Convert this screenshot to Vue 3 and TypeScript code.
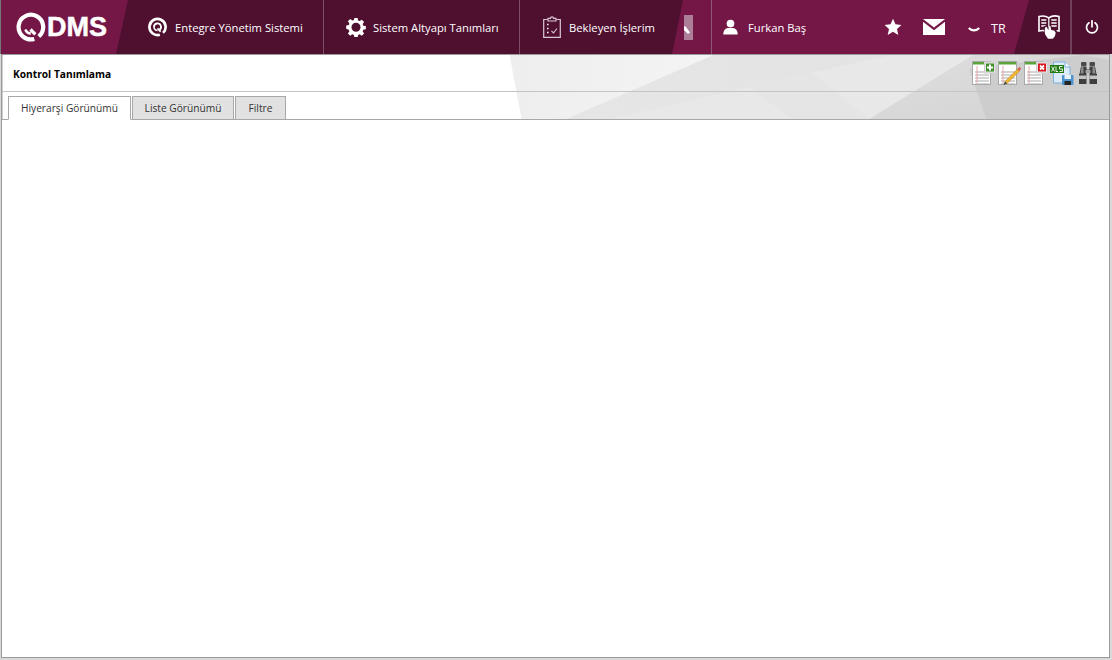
<script setup lang="ts">
const tabs: { label: string; width: number; active?: boolean }[] = [
  { label: 'Hiyerarşi Görünümü', width: 123, active: true },
  { label: 'Liste Görünümü', width: 102 },
  { label: 'Filtre', width: 51 },
]
const rows = [9, 12, 15, 18, 21]
</script>

<template>
  <div class="page">
    <header class="topbar">
      <svg class="bar-bg" viewBox="0 0 1112 54" preserveAspectRatio="none" aria-hidden="true">
        <polygon points="128,0 683,0 672,54 116,54" fill="#4f1030" />
        <polygon points="1029,0 1112,0 1112,54 1014,54" fill="#4f1030" />
      </svg>

      <div class="logo">
        <svg class="logo-q" viewBox="0 0 30 30" aria-hidden="true">
          <path d="M18.300 26.900A12.300 12.300 0 1 1 22.800 24.500" fill="none" stroke="#fff" stroke-width="4.200" />
          <path d="M9.300 17.500a6.200 6.200 0 0 0 5.500 4" fill="none" stroke="#fff" stroke-width="2.400" />
          <path d="M14.500 17.500l4.800 4.800" fill="none" stroke="#fff" stroke-width="3.200" />
        </svg>
        <span class="logo-text">DMS</span>
      </div>

      <div class="nav nav-a">
        <svg class="nav-icon small" viewBox="0 0 20 20" aria-hidden="true">
          <path d="M12.500 18.100A8.500 8.500 0 1 1 15.800 16.200" fill="none" stroke="#fff" stroke-width="2.800" />
          <path d="M6.300 10a3.700 3.700 0 1 1 5.500 3.200" fill="none" stroke="#fff" stroke-width="1.900" />
          <path d="M10 11.500l3.300 3.300" stroke="#fff" stroke-width="2" />
          <path d="M6.300 10a3.700 3.700 0 0 0 3.700 3.700" fill="none" stroke="#fff" stroke-width="1.600" />
        </svg>
        <span>Entegre Yönetim Sistemi</span>
      </div>

      <div class="nav nav-b">
        <svg class="nav-icon" viewBox="-1 -1 22 22" aria-hidden="true">
          <path
            fill="#fff"
            fill-rule="evenodd"
            d="M8.200 0h3.600l.5 2.800 1.700.7 2.400-1.600 2.500 2.500-1.600 2.400.7 1.700 2.800.5v3.600l-2.800.5-.7 1.700 1.600 2.400-2.500 2.500-2.400-1.600-1.700.7-.5 2.800H8.200l-.5-2.800-1.700-.7-2.400 1.600-2.500-2.500 1.600-2.400-.7-1.700L-.8 12V8.400l2.800-.5.7-1.700-1.600-2.400 2.500-2.500L6 2.900l1.700-.7zM10 5.200a5 5 0 1 0 0 10 5 5 0 0 0 0-10z"
          />
        </svg>
        <span>Sistem Altyapı Tanımları</span>
      </div>

      <div class="nav nav-c">
        <svg class="nav-icon narrow" viewBox="0 0 18 22" aria-hidden="true">
          <path d="M4.500 3.500H.7v17.800h16.600V3.500h-3.800" fill="none" stroke="#d9c8d1" stroke-width="1.200" />
          <path d="M5 5V2.300h2.500a1.500 1.500 0 0 1 3 0H13V5z" fill="none" stroke="#d9c8d1" stroke-width="1.200" />
          <path d="M4 8.500h1.500M4 12.500h1.500M4 16.500h1.500" stroke="#fff" stroke-width="1.400" />
          <path d="M8.500 15l2 2 3.500-4.500" fill="none" stroke="#d9c8d1" stroke-width="1.100" />
        </svg>
        <span>Bekleyen İşlerim</span>
      </div>

      <div class="overflow">
        <i>
          <svg viewBox="0 0 9 25" aria-hidden="true">
            <path d="M0 11l2 1 4 5.500-2 1.500-4-4z" fill="#fff" />
          </svg>
        </i>
      </div>

      <div class="user">
        <svg class="user-icon" viewBox="0 0 16 16" aria-hidden="true">
          <circle cx="8" cy="4.300" r="4.100" fill="#fff" />
          <path d="M0.300 16c0-4 1.800-6.500 4.700-7h6c2.900.5 4.700 3 4.700 7z" fill="#fff" />
        </svg>
        <span>Furkan Baş</span>
      </div>

      <div class="tools">
        <svg class="star" viewBox="0 0 18 18" aria-hidden="true">
          <path fill="#fff" d="M9 .8l2.500 5.500 5.900.6-4.400 4 1.300 6L9 13.800 3.700 16.900l1.300-6-4.400-4 5.900-.6z" />
        </svg>
        <svg class="mail" viewBox="0 0 22 16" aria-hidden="true">
          <path fill="#fff" d="M0 0h22L11 8.500zM0 2.800l11 8.400 11-8.400V16H0z" />
        </svg>
        <svg class="chevron" viewBox="0 0 12 6" aria-hidden="true">
          <path d="M.8 1c3 3.200 7.400 3.200 10.400 0" fill="none" stroke="#fff" stroke-width="2.200" />
        </svg>
        <span class="lang">TR</span>
      </div>

      <div class="guide">
        <svg viewBox="0 0 22 24" aria-hidden="true">
          <path d="M10.800 2.800C8 .9 4 .7 1 1.500v14.500c3-.8 7-.5 9.800 1.400C13.500 15.500 18 15.200 21 16V1.500C18 .7 13.500.9 10.800 2.800z" fill="none" stroke="#fff" stroke-width="1.600" />
          <path d="M10.800 2.800v14" stroke="#fff" stroke-width="1.200" />
          <path d="M3.300 5h5M3.300 8h5M3.300 11h5M13.300 5h5.400M13.300 8h5.400M13.300 11h5.400" stroke="#fff" stroke-width="1.300" />
          <path fill="#4f1030" d="M5.500 11.500l3.500-1.500 2 2.500 2-1.500 1.500 1.500 3.500.5 1 4-2 5.500-3 2H9.500l-3-5z" />
          <path fill="#fff" d="M7 12.500l1.600-.8 1.800 3.600.3-4 1.700-.2.800 4 3 .4 1.500 2.200-.8 3.500-2.200 2.600H10l-2.800-4.300-.6-3z" />
        </svg>
      </div>

      <div class="power">
        <svg viewBox="0 0 14 14" aria-hidden="true">
          <path d="M4 2.800a5.500 5.500 0 1 0 6 0" fill="none" stroke="#fff" stroke-width="1.700" stroke-linecap="round" />
          <path d="M7 .8v6" stroke="#fff" stroke-width="1.700" stroke-linecap="round" />
        </svg>
      </div>
    </header>

    <main class="panel">
      <div class="head">
        <svg class="head-bg" viewBox="0 0 1108 65" preserveAspectRatio="none" aria-hidden="true">
          <defs>
            <linearGradient id="soft" x1="0" x2="1" y1="0" y2="0">
              <stop offset="0" stop-color="#eeeeee" />
              <stop offset="1" stop-color="#f4f4f4" />
            </linearGradient>
            <linearGradient id="mid" x1="0" x2="1" y1="0" y2="0">
              <stop offset="0" stop-color="#e6e6e6" />
              <stop offset="1" stop-color="#e1e1e1" />
            </linearGradient>
            <linearGradient id="edge" x1="0" x2="1" y1="0" y2="1">
              <stop offset="0" stop-color="#dfdfdf" />
              <stop offset="1" stop-color="#d2d2d2" />
            </linearGradient>
          </defs>
          <polygon points="508,0 712,0 564,65 520,65" fill="url(#soft)" />
          <polygon points="712,0 1108,0 1108,65 564,65" fill="url(#mid)" />
          <polygon points="608,65 810,18 890,0 972,0 868,65" fill="#e8e8e8" />
          <polygon points="748,32 810,18 868,65 790,65" fill="#e5e5e5" />
          <polygon points="972,0 1108,0 1108,65 868,65" fill="url(#edge)" />
          <polygon points="968,14 985,65 1108,65 1108,5 1082,0" fill="#cdcdcd" />
        </svg>

        <div class="title-row">
          <h1>Kontrol Tanımlama</h1>
          <div class="actions">
            <svg class="act" viewBox="0 0 24 24" aria-hidden="true">
              <rect x=".5" y=".5" width="18" height="23" fill="#fff" stroke="#a8a8a8" />
              <rect x="1" y="1" width="17" height="2.500" fill="#5aa53a" />
              <path v-for="r in rows" :key="r" :d="`M3 ${r + 2}h14`" stroke="#a9a9a9" />
              <path d="M5 5v17" stroke="#e8a8a8" />
              <rect x="12.500" y="1" width="11" height="11" fill="#e5e5e5" stroke="#cfcfcf" />
              <rect x="14" y="2.500" width="8" height="8" fill="#3f8f2a" />
              <path d="M18 3.500v6M15 6.500h6" stroke="#fff" stroke-width="2" />
            </svg>
            <svg class="act" viewBox="0 0 24 24" aria-hidden="true">
              <rect x=".5" y=".5" width="18" height="23" fill="#fff" stroke="#a8a8a8" />
              <rect x="1" y="1" width="17" height="2.500" fill="#5aa53a" />
              <path v-for="r in rows" :key="r" :d="`M3 ${r + 2}h14`" stroke="#a9a9a9" />
              <path d="M5 5v17" stroke="#e8a8a8" />
              <path d="M7 20.500L19.500 8l2 2L9 22.500z" fill="#f2b632" stroke="#a8761a" stroke-width=".5" />
              <path d="M19.500 8l2-2 1.500 1.500L21.500 10z" fill="#d9534f" />
              <path d="M7 20.500L5.500 24l3.500-1.500z" fill="#333" />
            </svg>
            <svg class="act" viewBox="0 0 24 24" aria-hidden="true">
              <rect x=".5" y=".5" width="18" height="23" fill="#fff" stroke="#a8a8a8" />
              <rect x="1" y="1" width="17" height="2.500" fill="#5aa53a" />
              <path v-for="r in rows" :key="r" :d="`M3 ${r + 2}h14`" stroke="#a9a9a9" />
              <path d="M5 5v17" stroke="#e8a8a8" />
              <rect x="12.500" y="1" width="11" height="11" fill="#e5e5e5" stroke="#cfcfcf" />
              <rect x="14" y="2.500" width="8" height="8" fill="#d9141e" />
              <path d="M16 4.500l4 4M20 4.500l-4 4" stroke="#fff" stroke-width="1.800" />
            </svg>
            <svg class="act" viewBox="0 0 24 24" aria-hidden="true">
              <path d="M3.500 1H15l5 5v16H3.500z" fill="#dcebf9" stroke="#7aaedc" />
              <path d="M15 1v5h5" fill="#fff" stroke="#7aaedc" />
              <rect x="0" y="4" width="14" height="8" fill="#1f7a12" />
              <path d="M1.500 5.500l3 5M4.500 5.500l-3 5M6 5.500v5h2M12.500 5.500h-3v2.500h3v2.500h-3" stroke="#fff" fill="none" stroke-width=".9" />
              <rect x="12" y="14" width="11.500" height="10" rx="1" fill="#4d93d0" />
              <rect x="14.500" y="14" width="6.500" height="4" fill="#e9f1f8" />
              <rect x="14.500" y="20" width="6.500" height="4" fill="#262626" />
            </svg>
            <svg class="act bino" viewBox="0 0 20 24" aria-hidden="true">
              <rect x="3" y="1" width="5.500" height="4" rx="1" fill="#4a4a4a" />
              <rect x="11.500" y="1" width="5.500" height="4" rx="1" fill="#4a4a4a" />
              <path d="M3 5.500h5.500v3h3v-3H17l1.500 7.500h-7v-2h-3v2h-7z" fill="#3d3d3d" />
              <path d="M3.500 6h2v6.500h-3zM14.500 6h2l1 6.500h-3z" fill="#8c8c8c" />
              <rect x="7.500" y="9" width="5" height="3" fill="#a5a5a5" />
              <rect x="1" y="13" width="7.500" height="10" fill="#3f3f3f" />
              <rect x="11.500" y="13" width="7.500" height="10" fill="#3f3f3f" />
              <rect x="1" y="14.500" width="7.500" height="3.500" fill="#c2c2c2" />
              <rect x="11.500" y="14.500" width="7.500" height="3.500" fill="#c2c2c2" />
            </svg>
          </div>
        </div>

        <nav class="tabs">
          <div
            v-for="tab in tabs"
            :key="tab.label"
            class="tab"
            :class="{ active: tab.active }"
            :style="{ width: tab.width + 'px' }"
          >
            {{ tab.label }}
          </div>
        </nav>
      </div>
      <div class="content"></div>
    </main>
  </div>
</template>

<style scoped>
.page {
  width: 1112px;
  height: 660px;
  display: flex;
  flex-direction: column;
  overflow: hidden;
  background: #d9d9d9;
  font-family: 'Open Sans', 'Noto Sans', sans-serif;
}
.topbar {
  position: relative;
  flex: 0 0 54px;
  display: flex;
  align-items: center;
  background: #741747;
  color: #fff;
  font-size: 11.25px;
  border-left: 1px solid #777;
  box-sizing: border-box;
}
.bar-bg {
  position: absolute;
  left: -1px;
  top: 0;
  width: 1112px;
  height: 54px;
}
.topbar > div {
  position: relative;
}
.logo {
  width: 127px;
  display: flex;
  align-items: center;
  padding-left: 15px;
  box-sizing: border-box;
}
.logo-q {
  width: 30px;
  height: 30px;
  flex: none;
}
.logo-text {
  font-family: 'Liberation Sans', sans-serif;
  font-weight: 700;
  font-size: 27px;
  margin-left: 1px;
  -webkit-text-stroke: 0.5px #fff;
}
.nav {
  height: 54px;
  display: flex;
  align-items: center;
  box-sizing: border-box;
  white-space: nowrap;
}
.nav-a {
  width: 196px;
  padding-left: 20px;
  gap: 8px;
  border-right: 1px solid #7d5069;
}
.nav-b {
  width: 196px;
  padding-left: 22px;
  gap: 7px;
  border-right: 1px solid #7d5069;
}
.nav-c {
  width: 153px;
  padding-left: 23px;
  gap: 8px;
}
.nav-icon {
  width: 20px;
  height: 20px;
  flex: none;
}
.nav-icon.small {
  width: 19px;
  height: 20px;
}
.nav-icon.narrow {
  width: 18px;
  height: 22px;
}
.overflow {
  width: 39px;
  height: 54px;
  display: flex;
  align-items: center;
  padding-left: 11px;
  box-sizing: border-box;
  border-right: 1px solid #8c5a75;
}
.overflow i {
  display: block;
  width: 9px;
  height: 25px;
  background: #ad7e97;
}
.overflow svg {
  display: block;
  width: 9px;
  height: 25px;
}
.user {
  width: 161px;
  display: flex;
  align-items: center;
  gap: 10px;
  padding-left: 11px;
  box-sizing: border-box;
}
.user-icon {
  width: 15px;
  height: 16px;
  flex: none;
}
.tools {
  width: 147px;
  display: flex;
  align-items: center;
  padding-left: 11px;
  box-sizing: border-box;
}
.star {
  width: 18px;
  height: 18px;
  flex: none;
}
.mail {
  width: 22px;
  height: 16px;
  flex: none;
  margin-left: 21px;
}
.chevron {
  width: 12px;
  height: 6px;
  flex: none;
  margin-left: 23px;
  margin-top: 5px;
}
.lang {
  margin-left: 11px;
  font-size: 12.5px;
  margin-top: 2px;
}
.guide {
  width: 52px;
  height: 54px;
  display: flex;
  align-items: center;
  padding-left: 18px;
  box-sizing: border-box;
  border-right: 2px solid #6f4059;
}
.guide svg {
  width: 22px;
  height: 24px;
}
.power {
  flex: 1;
  display: flex;
  align-items: center;
  padding-left: 13px;
}
.power svg {
  width: 14px;
  height: 14px;
}
.panel {
  flex: 1;
  display: flex;
  flex-direction: column;
  margin: 0 2px 2px 1px;
  border: 1px solid #9a9a9a;
  background: #fff;
  min-height: 0;
  box-shadow: inset 1px 0 0 #cfcfcf;
}
.head {
  position: relative;
  height: 64px;
  flex: none;
  display: flex;
  flex-direction: column;
  border-bottom: 1px solid #a8a8a8;
}
.head-bg {
  position: absolute;
  inset: 0;
  width: 100%;
  height: 64px;
}
.title-row {
  position: relative;
  height: 36px;
  flex: none;
  display: flex;
  align-items: flex-start;
  justify-content: space-between;
  border-bottom: 1px solid #c4c4c4;
  padding: 0 11px 0 11px;
}
h1 {
  margin: 12px 0 0;
  font-size: 10.2px;
  font-weight: 700;
  color: #000;
  line-height: 15px;
}
.actions {
  display: flex;
  gap: 2px;
  margin-top: 6px;
}
.act {
  width: 24px;
  height: 24px;
  flex: none;
}
.act.bino {
  width: 20px;
  margin-left: 2px;
}
.tabs {
  position: relative;
  display: flex;
  gap: 1px;
  padding: 4px 0 0 6px;
}
.tab {
  height: 24px;
  box-sizing: border-box;
  border: 1px solid #a8a8a8;
  background: #e1e1e1;
  color: #333;
  font-size: 10.2px;
  line-height: 22px;
  text-align: center;
  white-space: nowrap;
}
.tab.active {
  background: #fff;
  border-bottom-color: #fff;
}
.content {
  flex: 1;
  background: #fff;
}
</style>

<style>
html,
body {
  margin: 0;
  overflow: hidden;
}
</style>
